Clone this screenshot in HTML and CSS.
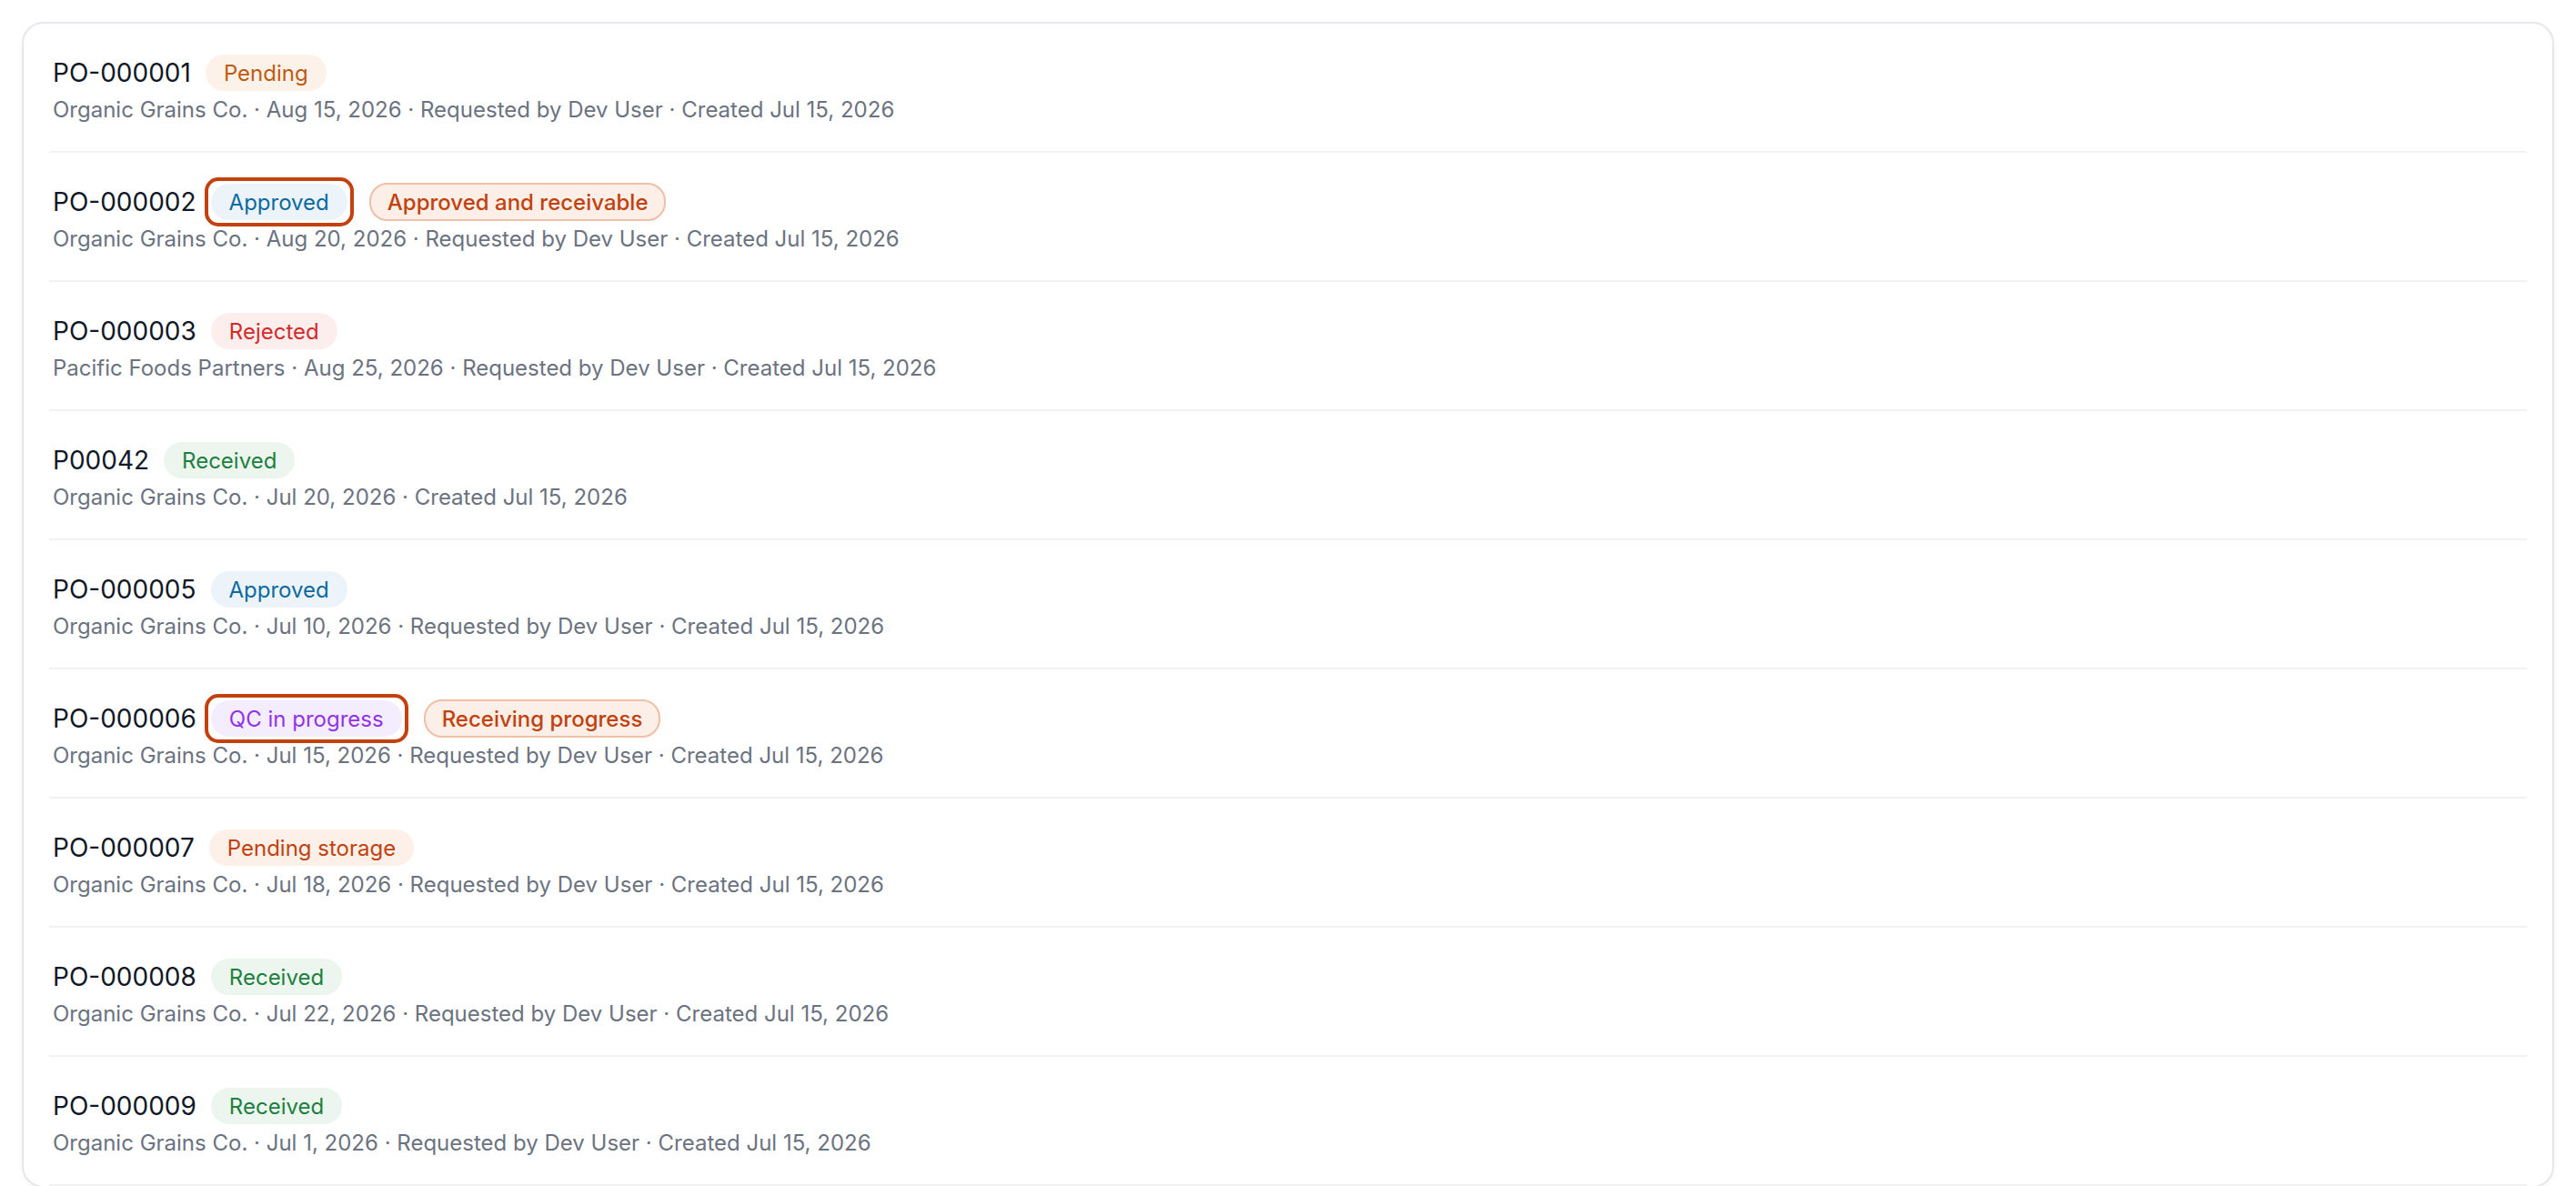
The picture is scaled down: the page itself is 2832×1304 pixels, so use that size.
FILE: index.html
```html
<!DOCTYPE html>
<html>
	<head>
		<meta charset="utf-8">
		<title>Purchase orders</title>

		<link rel="stylesheet" href="styles.css">
	</head>
	<body>
		<div class="card">
			<ul class="orders">
				<li class="order">
					<div class="order-head">
						<span class="order-no">PO-000001</span>
						<span class="badge pending">Pending</span>
					</div>
					<div class="order-meta">Organic Grains Co. · Aug 15, 2026 · Requested by Dev User · Created Jul 15, 2026</div>
				</li>
				<li class="order">
					<div class="order-head">
						<span class="order-no">PO-000002</span>
						<span class="focus"><span class="badge approved">Approved</span></span>
						<span class="badge hint">Approved and receivable</span>
					</div>
					<div class="order-meta">Organic Grains Co. · Aug 20, 2026 · Requested by Dev User · Created Jul 15, 2026</div>
				</li>
				<li class="order">
					<div class="order-head">
						<span class="order-no">PO-000003</span>
						<span class="badge rejected">Rejected</span>
					</div>
					<div class="order-meta">Pacific Foods Partners · Aug 25, 2026 · Requested by Dev User · Created Jul 15, 2026</div>
				</li>
				<li class="order">
					<div class="order-head">
						<span class="order-no">P00042</span>
						<span class="badge received">Received</span>
					</div>
					<div class="order-meta">Organic Grains Co. · Jul 20, 2026 · Created Jul 15, 2026</div>
				</li>
				<li class="order">
					<div class="order-head">
						<span class="order-no">PO-000005</span>
						<span class="badge approved">Approved</span>
					</div>
					<div class="order-meta">Organic Grains Co. · Jul 10, 2026 · Requested by Dev User · Created Jul 15, 2026</div>
				</li>
				<li class="order">
					<div class="order-head">
						<span class="order-no">PO-000006</span>
						<span class="focus"><span class="badge qc">QC in progress</span></span>
						<span class="badge hint">Receiving progress</span>
					</div>
					<div class="order-meta">Organic Grains Co. · Jul 15, 2026 · Requested by Dev User · Created Jul 15, 2026</div>
				</li>
				<li class="order">
					<div class="order-head">
						<span class="order-no">PO-000007</span>
						<span class="badge storage">Pending storage</span>
					</div>
					<div class="order-meta">Organic Grains Co. · Jul 18, 2026 · Requested by Dev User · Created Jul 15, 2026</div>
				</li>
				<li class="order">
					<div class="order-head">
						<span class="order-no">PO-000008</span>
						<span class="badge received">Received</span>
					</div>
					<div class="order-meta">Organic Grains Co. · Jul 22, 2026 · Requested by Dev User · Created Jul 15, 2026</div>
				</li>
				<li class="order">
					<div class="order-head">
						<span class="order-no">PO-000009</span>
						<span class="badge received">Received</span>
					</div>
					<div class="order-meta">Organic Grains Co. · Jul 1, 2026 · Requested by Dev User · Created Jul 15, 2026</div>
				</li>
			</ul>
		</div>
	</body>
</html>
```

FILE: styles.css
```css
* {
	margin: 0;
	padding: 0;
	box-sizing: border-box;
}

body {
	padding: 24px;
	background: #ffffff;
	font-family: Inter, "Noto Sans", sans-serif;
	color: #111827;
}

.card {
	background: #ffffff;
	border: 2px solid #e6e7eb;
	border-radius: 24px;
	box-shadow: 0 2px 4px rgba(17, 24, 39, 0.04);
}

.orders {
	list-style: none;
	padding: 0 28px;
}

.order {
	display: flex;
	flex-direction: column;
	gap: 5px;
	padding: 34px 4px 29px;
	border-bottom: 2px solid #f1f2f4;
}

.order-head {
	display: flex;
	align-items: center;
	height: 40px;
}

.order-no {
	font-size: 28px;
	line-height: 40px;
	margin-right: 16px;
	color: #111827;
}

.order-meta {
	font-size: 24px;
	line-height: 32px;
	color: #6b7280;
}

.badge {
	display: inline-flex;
	align-items: center;
	height: 40px;
	padding: 0 20px;
	border-radius: 20px;
	font-size: 24px;
	white-space: nowrap;
}

.focus {
	display: inline-flex;
	border-radius: 8px;
	outline: 4px solid #c2410c;
	outline-offset: 3px;
}

.pending {
	background: #fdf2ea;
	color: #c05a10;
}

.approved {
	background: #ecf3f9;
	color: #0b6a9f;
}

.rejected {
	background: #fdeeee;
	color: #d42a2a;
}

.received {
	background: #ecf6ee;
	color: #1c8040;
}

.qc {
	background: #f4edfe;
	color: #9234e6;
}

.storage {
	background: #fdf0e9;
	color: #c2410c;
}

.hint {
	margin-left: 24px;
	height: 42px;
	padding: 0 18px;
	border: 2px solid #efbfa6;
	background: #fcefe8;
	color: #c2410c;
	font-weight: 500;
}
```
